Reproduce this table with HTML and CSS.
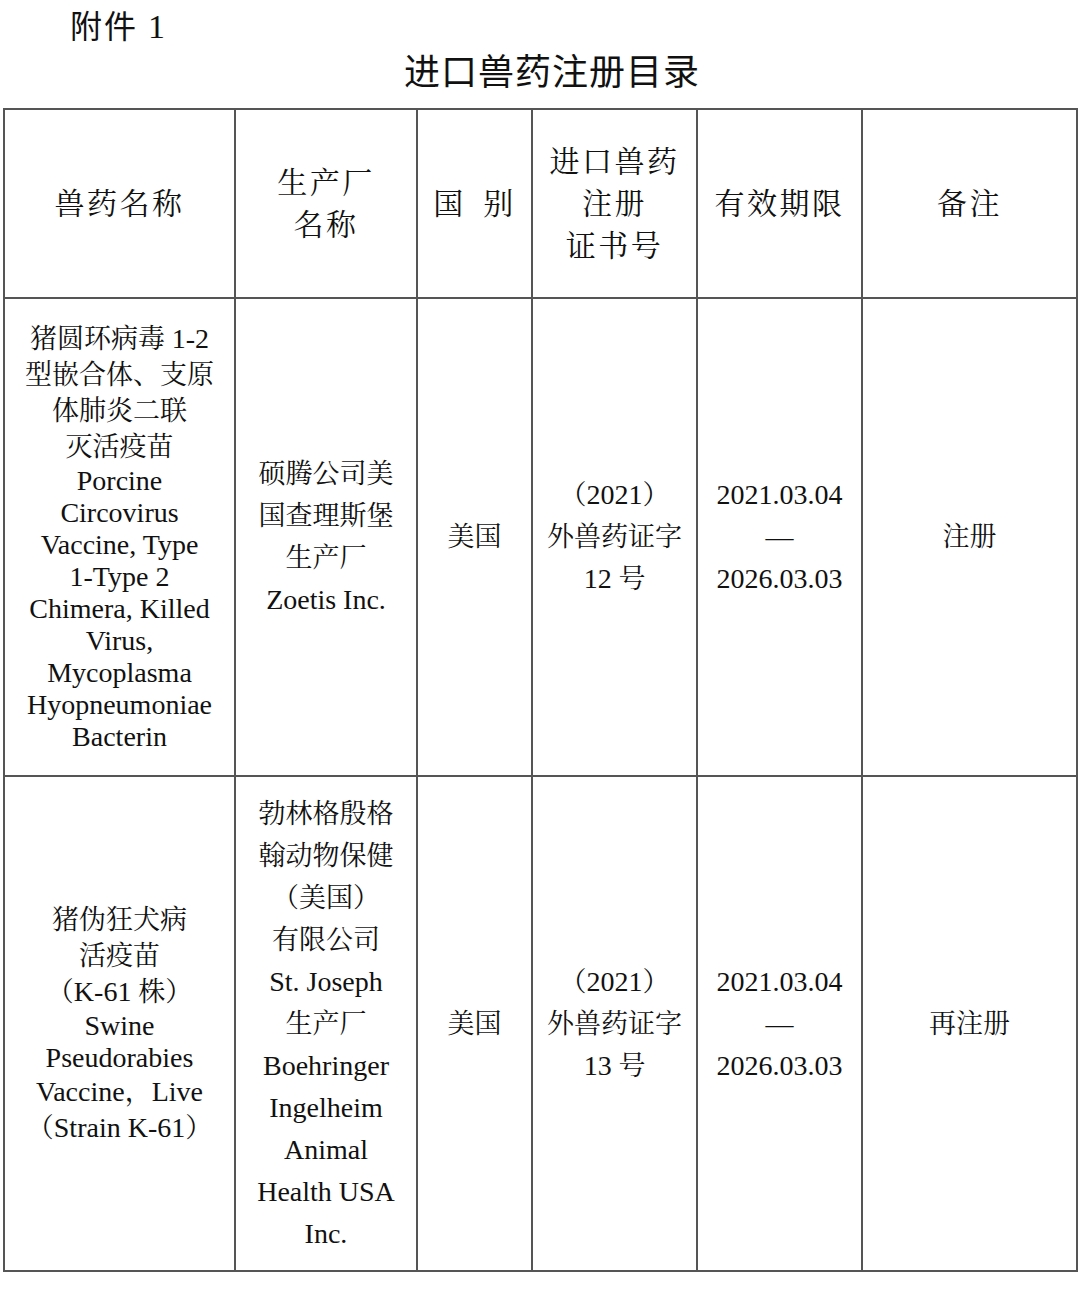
FILE: index.html
```html
<!DOCTYPE html>
<html lang="zh-CN">
<head>
<meta charset="utf-8">
<title>进口兽药注册目录</title>
<link rel="stylesheet" href="styles.css">
</head>
<body>
<div class="attach"><span class="cjk-hei">附件</span> <span class="num">1</span></div>
<h1 class="title">进口兽药注册目录</h1>
<table class="reg">
  <colgroup>
    <col class="c1"><col class="c2"><col class="c3"><col class="c4"><col class="c5"><col class="c6">
  </colgroup>
  <tr class="row-head">
    <th><div class="h">兽药名称</div></th>
    <th><div class="h">生产厂</div><div class="h">名称</div></th>
    <th><div class="h">国&ensp;别</div></th>
    <th><div class="h">进口兽药</div><div class="h">注册</div><div class="h">证书号</div></th>
    <th><div class="h">有效期限</div></th>
    <th><div class="h">备注</div></th>
  </tr>
  <tr class="row-1">
    <td>
      <div class="l36">猪圆环病毒 <span class="en">1-2</span></div>
      <div class="l36">型嵌合体、支原</div>
      <div class="l36">体肺炎二联</div>
      <div class="l36">灭活疫苗</div>
      <div class="l32 en">Porcine</div>
      <div class="l32 en">Circovirus</div>
      <div class="l32 en">Vaccine, Type</div>
      <div class="l32 en">1-Type 2</div>
      <div class="l32 en">Chimera, Killed</div>
      <div class="l32 en">Virus,</div>
      <div class="l32 en">Mycoplasma</div>
      <div class="l32 en">Hyopneumoniae</div>
      <div class="l32 en">Bacterin</div>
    </td>
    <td>
      <div class="l42">硕腾公司美</div>
      <div class="l42">国查理斯堡</div>
      <div class="l42">生产厂</div>
      <div class="l42 en">Zoetis Inc.</div>
    </td>
    <td><div class="l42">美国</div></td>
    <td>
      <div class="l42">（<span class="en">2021</span>）</div>
      <div class="l42">外兽药证字</div>
      <div class="l42"><span class="en">12</span> 号</div>
    </td>
    <td>
      <div class="l42 en">2021.03.04</div>
      <div class="l42 en">—</div>
      <div class="l42 en">2026.03.03</div>
    </td>
    <td><div class="l42">注册</div></td>
  </tr>
  <tr class="row-2">
    <td>
      <div class="l36">猪伪狂犬病</div>
      <div class="l36">活疫苗</div>
      <div class="l36">（<span class="en">K-61</span> 株）</div>
      <div class="l32 en">Swine</div>
      <div class="l32 en">Pseudorabies</div>
      <div class="l36"><span class="en">Vaccine</span>，<span class="en">Live</span></div>
      <div class="l36">（<span class="en">Strain K-61</span>）</div>
    </td>
    <td>
      <div class="l42">勃林格殷格</div>
      <div class="l42">翰动物保健</div>
      <div class="l42">（美国）</div>
      <div class="l42">有限公司</div>
      <div class="l42 en">St. Joseph</div>
      <div class="l42">生产厂</div>
      <div class="l42 en">Boehringer</div>
      <div class="l42 en">Ingelheim</div>
      <div class="l42 en">Animal</div>
      <div class="l42 en">Health USA</div>
      <div class="l42 en">Inc.</div>
    </td>
    <td><div class="l42">美国</div></td>
    <td>
      <div class="l42">（<span class="en">2021</span>）</div>
      <div class="l42">外兽药证字</div>
      <div class="l42"><span class="en">13</span> 号</div>
    </td>
    <td>
      <div class="l42 en">2021.03.04</div>
      <div class="l42 en">—</div>
      <div class="l42 en">2026.03.03</div>
    </td>
    <td><div class="l42">再注册</div></td>
  </tr>
</table>
</body>
</html>
```
FILE: styles.css
```css
html, body {
  margin: 0;
  padding: 0;
  background: #ffffff;
  color: #111111;
}

body {
  font-family: "Liberation Serif", "Noto Serif CJK SC", "Noto Sans CJK SC", serif;
}

.attach {
  height: 48px;
  line-height: 48px;
  padding-left: 70px;
  font-size: 32px;
  letter-spacing: 2px;
}

.cjk-hei {
  font-family: "Noto Sans CJK SC", sans-serif;
}

.num {
  font-family: "Liberation Serif", serif;
  font-size: 34px;
}

.title {
  margin: 0;
  padding: 0 0 18px 24px;
  line-height: 42px;
  font-family: "Noto Sans CJK SC", sans-serif;
  font-weight: 400;
  font-size: 36px;
  letter-spacing: 1px;
  text-align: center;
}

.reg {
  border-collapse: collapse;
  table-layout: fixed;
  width: 1073px;
  margin-left: 3px;
}

.c1 { width: 231px; }
.c2 { width: 182px; }
.c3 { width: 115px; }
.c4 { width: 165px; }
.c5 { width: 165px; }
.c6 { width: 215px; }

.reg th,
.reg td {
  border: 2px solid #555555;
  padding: 0;
  text-align: center;
  vertical-align: middle;
  font-weight: 400;
  font-size: 27px;
}

.row-head { height: 189px; }
.row-1 { height: 478px; }
.row-2 { height: 495px; }

.h {
  font-size: 30px;
  line-height: 42px;
  letter-spacing: 2.5px;
}

.l42, .l36, .l32 {
  white-space: nowrap;
}

.l42 { line-height: 42px; }
.l36 { line-height: 36px; }
.l32 { line-height: 32px; }

.en {
  font-size: 28px;
  letter-spacing: 0;
}
```
